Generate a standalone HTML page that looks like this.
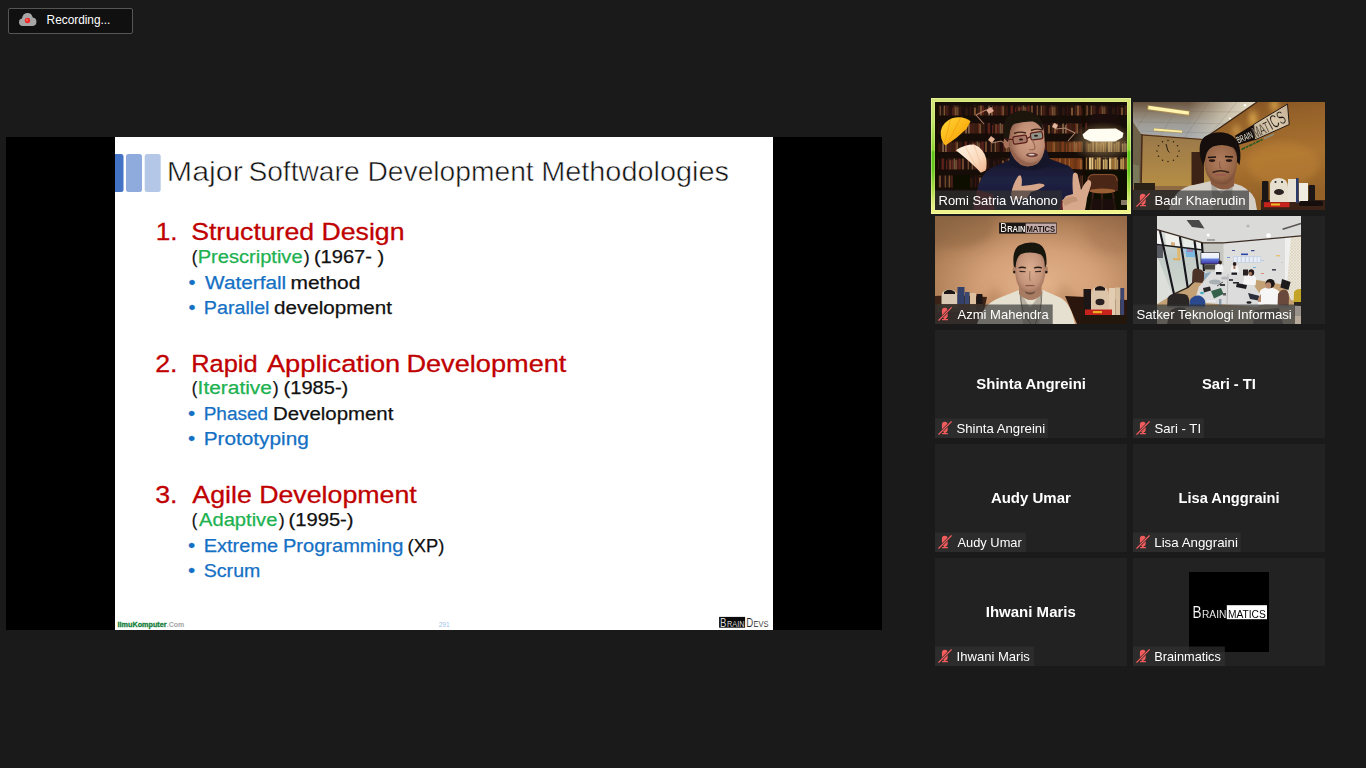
<!DOCTYPE html>
<html>
<head>
<meta charset="utf-8">
<title>Zoom Meeting</title>
<style>
html,body{margin:0;padding:0;width:1366px;height:768px;overflow:hidden;background:#1a1a1a;}
svg{position:absolute;left:0;top:0;display:block;}
text{font-family:"Liberation Sans",sans-serif;}
.lb{font-size:12.7px;fill:#fff;}
.nm{font-size:15px;font-weight:bold;fill:#fff;}
.h{font-size:24.3px;fill:#c00000;stroke:#c00000;stroke-width:.3px;}
.s{font-size:18.8px;fill:#111;stroke:#111;stroke-width:.25px;}
.g{fill:#20b150;stroke:#20b150;}
.b{fill:#1470c4;stroke:#1470c4;}
</style>
</head>
<body>
<svg width="1366" height="768" viewBox="0 0 1366 768">
<defs>
<linearGradient id="spk" x1="0" y1="0" x2="0" y2="1">
<stop offset="0" stop-color="#d6e478"/><stop offset="0.2" stop-color="#c2e468"/><stop offset="0.45" stop-color="#8ed632"/><stop offset="0.465" stop-color="#5cc418"/><stop offset="0.62" stop-color="#68c820"/><stop offset="0.8" stop-color="#b0de4c"/><stop offset="0.92" stop-color="#e2ee80"/><stop offset="1" stop-color="#f2f48a"/>
</linearGradient>

</defs>

<!-- recording badge -->
<rect x="8.5" y="8.5" width="124" height="25" rx="1.5" fill="#101010" stroke="#555" stroke-width="1"/>
<path d="M22.6 26 a3.8 3.8 0 0 1 -0.6 -7.5 a5.6 6.6 0 0 1 10.8 -1 a4.3 4.3 0 0 1 0 8.5 z" fill="#a6a6a6"/>
<circle cx="27.5" cy="20.5" r="2.7" fill="#f02828"/><circle cx="27" cy="20" r="1.1" fill="#ff6a60"/>
<text x="46.6" y="24.4" font-size="12.7" fill="#fff" textLength="63.8" lengthAdjust="spacingAndGlyphs">Recording...</text>

<!-- shared screen -->
<rect x="6" y="137" width="876" height="493" fill="#000"/>
<rect x="115" y="137" width="658" height="493" fill="#fff"/>
<path d="M115 154 h6 a2.5 2.5 0 0 1 2.5 2.5 v33 a2.5 2.5 0 0 1 -2.5 2.5 h-6 z" fill="#4472c4"/>
<rect x="126" y="154" width="16" height="38" rx="2.5" fill="#8faadc"/>
<rect x="144.7" y="154" width="16" height="38" rx="2.5" fill="#b4c7e7"/>
<text x="166.8" y="180.6" font-size="27.2" fill="#111" stroke="#fff" stroke-width="0.5" textLength="76.1" lengthAdjust="spacingAndGlyphs">Major</text>
<text x="248.4" y="180.6" font-size="27.2" fill="#111" stroke="#fff" stroke-width="0.5" textLength="111.2" lengthAdjust="spacingAndGlyphs">Software</text>
<text x="367.5" y="180.6" font-size="27.2" fill="#111" stroke="#fff" stroke-width="0.5" textLength="166.2" lengthAdjust="spacingAndGlyphs">Development</text>
<text x="541.2" y="180.6" font-size="27.2" fill="#111" stroke="#fff" stroke-width="0.5" textLength="187.8" lengthAdjust="spacingAndGlyphs">Methodologies</text>

<!-- block 1 -->
<text class="h" x="155.7" y="239.6" textLength="21.8" lengthAdjust="spacingAndGlyphs">1.</text>
<text class="h" x="191.2" y="239.6" textLength="213.3" lengthAdjust="spacingAndGlyphs">Structured Design</text>
<text class="s" x="191.7" y="263.2" textLength="5.6" lengthAdjust="spacingAndGlyphs">(</text>
<text class="s g" x="197.7" y="263.2" textLength="104.9" lengthAdjust="spacingAndGlyphs">Prescriptive</text>
<text class="s" x="303.7" y="263.2" textLength="5.9" lengthAdjust="spacingAndGlyphs">)</text>
<text class="s" x="313.9" y="263.2" textLength="70.3" lengthAdjust="spacingAndGlyphs">(1967- )</text>
<text class="s b" x="188.4" y="288.6" textLength="7.0" lengthAdjust="spacingAndGlyphs">•</text>
<text class="s b" x="205.1" y="288.6" textLength="81.1" lengthAdjust="spacingAndGlyphs">Waterfall</text>
<text class="s" x="290.5" y="288.6" textLength="69.9" lengthAdjust="spacingAndGlyphs">method</text>
<text class="s b" x="188.4" y="313.7" textLength="7.0" lengthAdjust="spacingAndGlyphs">•</text>
<text class="s b" x="203.8" y="313.7" textLength="65.7" lengthAdjust="spacingAndGlyphs">Parallel</text>
<text class="s" x="274.0" y="313.7" textLength="118.0" lengthAdjust="spacingAndGlyphs">development</text>
<!-- block 2 -->
<text class="h" x="155.2" y="371.9" textLength="22.3" lengthAdjust="spacingAndGlyphs">2.</text>
<text class="h" x="191.2" y="371.9" textLength="66.4" lengthAdjust="spacingAndGlyphs">Rapid</text>
<text class="h" x="266.9" y="371.9" textLength="133.4" lengthAdjust="spacingAndGlyphs">Application</text>
<text class="h" x="406.4" y="371.9" textLength="160.0" lengthAdjust="spacingAndGlyphs">Development</text>
<text class="s" x="191.8" y="393.9" textLength="5.5" lengthAdjust="spacingAndGlyphs">(</text>
<text class="s g" x="197.6" y="393.9" textLength="74.3" lengthAdjust="spacingAndGlyphs">Iterative</text>
<text class="s" x="272.7" y="393.9" textLength="5.9" lengthAdjust="spacingAndGlyphs">)</text>
<text class="s" x="283.6" y="393.9" textLength="64.7" lengthAdjust="spacingAndGlyphs">(1985-)</text>
<text class="s b" x="188.0" y="419.6" textLength="7.2" lengthAdjust="spacingAndGlyphs">•</text>
<text class="s b" x="203.7" y="419.6" textLength="64.5" lengthAdjust="spacingAndGlyphs">Phased</text>
<text class="s" x="273.1" y="419.6" textLength="120.3" lengthAdjust="spacingAndGlyphs">Development</text>
<text class="s b" x="188.0" y="445.0" textLength="7.2" lengthAdjust="spacingAndGlyphs">•</text>
<text class="s b" x="203.7" y="445.0" textLength="105.1" lengthAdjust="spacingAndGlyphs">Prototyping</text>
<!-- block 3 -->
<text class="h" x="155.2" y="503.1" textLength="22.3" lengthAdjust="spacingAndGlyphs">3.</text>
<text class="h" x="192.3" y="503.1" textLength="224.4" lengthAdjust="spacingAndGlyphs">Agile Development</text>
<text class="s" x="191.8" y="526.0" textLength="5.5" lengthAdjust="spacingAndGlyphs">(</text>
<text class="s g" x="199.0" y="526.0" textLength="78.4" lengthAdjust="spacingAndGlyphs">Adaptive</text>
<text class="s" x="278.7" y="526.0" textLength="5.9" lengthAdjust="spacingAndGlyphs">)</text>
<text class="s" x="288.6" y="526.0" textLength="64.9" lengthAdjust="spacingAndGlyphs">(1995-)</text>
<text class="s b" x="188.0" y="551.6" textLength="7.2" lengthAdjust="spacingAndGlyphs">•</text>
<text class="s b" x="203.7" y="551.6" textLength="74.5" lengthAdjust="spacingAndGlyphs">Extreme</text>
<text class="s b" x="282.9" y="551.6" textLength="120.5" lengthAdjust="spacingAndGlyphs">Programming</text>
<text class="s" x="407.6" y="551.6" textLength="36.7" lengthAdjust="spacingAndGlyphs">(XP)</text>
<text class="s b" x="188.0" y="577.0" textLength="7.2" lengthAdjust="spacingAndGlyphs">•</text>
<text class="s b" x="203.8" y="577.0" textLength="56.5" lengthAdjust="spacingAndGlyphs">Scrum</text>

<!-- slide footer -->
<text x="117.6" y="626.7" font-size="8" font-weight="bold" fill="#17803c" stroke="#17803c" stroke-width="0.35" textLength="49" lengthAdjust="spacingAndGlyphs">IlmuKomputer</text>
<text x="166.8" y="626.7" font-size="8" font-weight="bold" fill="#a4a4a4" textLength="17.4" lengthAdjust="spacingAndGlyphs">.Com</text>
<text x="438.7" y="626.8" font-size="7.2" fill="#9cc2ec" textLength="11" lengthAdjust="spacingAndGlyphs">291</text>
<rect x="719.1" y="616.9" width="26" height="10.8" fill="#0a0a0a"/>
<text x="720" y="626.7" font-size="12.6" fill="#d8d8d8" textLength="6.4" lengthAdjust="spacingAndGlyphs">B</text>
<text x="727" y="626.7" font-size="8.4" fill="#d8d8d8" textLength="17.6" lengthAdjust="spacingAndGlyphs">RAIN</text>
<text x="746.2" y="626.7" font-size="12.6" fill="#222" stroke="#fff" stroke-width="0.15" textLength="7" lengthAdjust="spacingAndGlyphs">D</text>
<text x="753.5" y="626.7" font-size="8.4" fill="#222" stroke="#fff" stroke-width="0.1" textLength="15" lengthAdjust="spacingAndGlyphs">EVS</text>

<!-- TILES -->
<g id="tiles">
<!-- speaker border -->
<rect x="931" y="98" width="200" height="116" fill="url(#spk)"/>
<rect x="931.5" y="98.5" width="199" height="115" fill="none" stroke="#ffffc0" stroke-opacity="0.45" stroke-width="1"/>
<rect x="934.5" y="101.5" width="193" height="109" fill="none" stroke="#ffffc0" stroke-opacity="0.25" stroke-width="1"/>
<rect x="935" y="102" width="192" height="108" fill="#1a0f0a"/>
<rect x="1133" y="102" width="192" height="108" fill="#b9853f"/>
<rect x="935" y="216" width="192" height="108" fill="#c79a72"/>
<rect x="1133" y="216" width="192" height="108" fill="#222"/>
<rect x="1157" y="216" width="144" height="108" fill="#d8d8d8"/>
<rect x="935" y="330" width="192" height="108" fill="#222"/>
<rect x="1133" y="330" width="192" height="108" fill="#222"/>
<rect x="935" y="444" width="192" height="108" fill="#222"/>
<rect x="1133" y="444" width="192" height="108" fill="#222"/>
<rect x="935" y="558" width="192" height="108" fill="#222"/>
<rect x="1133" y="558" width="192" height="108" fill="#222"/>
<!--PIC1-->
<svg x="935" y="102" width="192" height="108" viewBox="0 0 192 108" overflow="hidden">
<defs>
<pattern id="bk1" width="97" height="12" patternUnits="userSpaceOnUse"><rect width="97" height="12" fill="#1a0e09"/><rect x="0.0" y="2.0" width="1.2" height="10.0" fill="#24120a"/><rect x="1.6" y="0.0" width="2.6" height="12.0" fill="#24120a"/><rect x="4.6" y="0.0" width="1.5" height="12.0" fill="#7c5032"/><rect x="6.5" y="2.0" width="2.2" height="10.0" fill="#2c140c"/><rect x="8.7" y="0.0" width="1.2" height="12.0" fill="#96683f"/><rect x="10.3" y="0.0" width="2.6" height="12.0" fill="#4a2416"/><rect x="12.9" y="0.0" width="1.5" height="12.0" fill="#3a1a10"/><rect x="14.6" y="1.2" width="1.8" height="10.8" fill="#24120a"/><rect x="16.8" y="2.0" width="1.8" height="10.0" fill="#581e14"/><rect x="18.6" y="0.0" width="1.5" height="12.0" fill="#5e3220"/><rect x="20.1" y="1.2" width="1.5" height="10.8" fill="#96683f"/><rect x="21.8" y="1.2" width="1.8" height="10.8" fill="#7c5032"/><rect x="24.0" y="0.6" width="2.2" height="11.4" fill="#32180f"/><rect x="26.2" y="0.0" width="1.5" height="12.0" fill="#24120a"/><rect x="30.1" y="2.0" width="2.6" height="10.0" fill="#32180f"/><rect x="34.7" y="1.2" width="1.8" height="10.8" fill="#3a1a10"/><rect x="36.5" y="0.0" width="2.2" height="12.0" fill="#24120a"/><rect x="38.9" y="2.0" width="2.2" height="10.0" fill="#8a5a36"/><rect x="42.6" y="0.0" width="2.2" height="12.0" fill="#4a2416"/><rect x="45.0" y="0.0" width="2.2" height="12.0" fill="#8a5a36"/><rect x="47.4" y="0.0" width="1.5" height="12.0" fill="#6a261c"/><rect x="49.3" y="2.0" width="1.8" height="10.0" fill="#40200f"/><rect x="51.1" y="2.0" width="2.2" height="10.0" fill="#3a1a10"/><rect x="53.3" y="0.6" width="1.5" height="11.4" fill="#a8845c"/><rect x="55.0" y="1.2" width="1.0" height="10.8" fill="#3a1a10"/><rect x="56.2" y="2.0" width="1.0" height="10.0" fill="#a8845c"/><rect x="57.2" y="0.6" width="1.0" height="11.4" fill="#96683f"/><rect x="58.4" y="0.6" width="2.2" height="11.4" fill="#581e14"/><rect x="60.6" y="0.0" width="2.2" height="12.0" fill="#4a2416"/><rect x="63.0" y="0.6" width="2.6" height="11.4" fill="#40200f"/><rect x="65.8" y="0.0" width="1.2" height="12.0" fill="#6a261c"/><rect x="67.2" y="0.6" width="2.2" height="11.4" fill="#8a5a36"/><rect x="69.4" y="0.0" width="1.0" height="12.0" fill="#24120a"/><rect x="70.4" y="0.6" width="2.6" height="11.4" fill="#3a1a10"/><rect x="75.6" y="0.0" width="1.5" height="12.0" fill="#6a261c"/><rect x="77.1" y="0.0" width="1.0" height="12.0" fill="#6a261c"/><rect x="80.0" y="2.0" width="1.2" height="10.0" fill="#6a261c"/><rect x="81.4" y="0.0" width="1.5" height="12.0" fill="#3a1a10"/><rect x="83.1" y="1.2" width="2.2" height="10.8" fill="#74402a"/><rect x="85.5" y="1.2" width="1.8" height="10.8" fill="#6a261c"/><rect x="87.7" y="0.0" width="1.0" height="12.0" fill="#a8845c"/><rect x="89.1" y="1.2" width="2.2" height="10.8" fill="#7c5032"/><rect x="91.3" y="1.2" width="1.0" height="10.8" fill="#581e14"/><rect x="92.5" y="0.0" width="2.2" height="12.0" fill="#6a261c"/><rect x="95.9" y="0.0" width="2.6" height="12.0" fill="#7c5032"/></pattern>
<pattern id="bk2" width="83" height="12" patternUnits="userSpaceOnUse"><rect width="83" height="12" fill="#1a0e09"/><rect x="0.0" y="0.6" width="2.2" height="11.4" fill="#7a4a22"/><rect x="2.2" y="0.0" width="1.8" height="12.0" fill="#c8a060"/><rect x="4.0" y="0.0" width="1.5" height="12.0" fill="#5a3018"/><rect x="5.5" y="0.0" width="2.2" height="12.0" fill="#c8a060"/><rect x="8.1" y="1.2" width="1.5" height="10.8" fill="#986a30"/><rect x="9.6" y="2.0" width="1.2" height="10.0" fill="#b8904c"/><rect x="10.8" y="0.0" width="1.0" height="12.0" fill="#b89050"/><rect x="11.8" y="0.6" width="1.2" height="11.4" fill="#7a4a22"/><rect x="13.0" y="1.2" width="1.2" height="10.8" fill="#c8a060"/><rect x="14.4" y="0.0" width="1.8" height="12.0" fill="#986a30"/><rect x="17.9" y="0.0" width="2.6" height="12.0" fill="#e0c080"/><rect x="20.7" y="0.0" width="1.8" height="12.0" fill="#e0c080"/><rect x="22.5" y="0.0" width="1.0" height="12.0" fill="#7a4a22"/><rect x="23.7" y="2.0" width="1.8" height="10.0" fill="#b89050"/><rect x="25.7" y="0.0" width="1.8" height="12.0" fill="#b8904c"/><rect x="27.5" y="0.0" width="2.2" height="12.0" fill="#c8a060"/><rect x="30.1" y="0.6" width="1.5" height="11.4" fill="#3a2010"/><rect x="31.8" y="2.0" width="1.8" height="10.0" fill="#d0b070"/><rect x="33.8" y="1.2" width="1.5" height="10.8" fill="#b89050"/><rect x="35.3" y="2.0" width="1.2" height="10.0" fill="#e0c080"/><rect x="38.0" y="0.6" width="2.6" height="11.4" fill="#e0c080"/><rect x="40.6" y="0.6" width="2.6" height="11.4" fill="#986a30"/><rect x="43.2" y="0.0" width="2.6" height="12.0" fill="#b89050"/><rect x="46.2" y="2.0" width="1.0" height="10.0" fill="#c8a060"/><rect x="49.2" y="1.2" width="2.6" height="10.8" fill="#b89050"/><rect x="51.8" y="0.0" width="1.2" height="12.0" fill="#b8904c"/><rect x="53.4" y="1.2" width="1.0" height="10.8" fill="#986a30"/><rect x="54.4" y="0.0" width="1.8" height="12.0" fill="#7a4a22"/><rect x="56.2" y="1.2" width="2.2" height="10.8" fill="#5a3018"/><rect x="58.6" y="0.6" width="1.8" height="11.4" fill="#7a4a22"/><rect x="60.4" y="2.0" width="1.0" height="10.0" fill="#a87a40"/><rect x="61.8" y="0.0" width="1.5" height="12.0" fill="#986a30"/><rect x="63.5" y="2.0" width="1.0" height="10.0" fill="#e0c080"/><rect x="64.7" y="0.6" width="1.5" height="11.4" fill="#3a2010"/><rect x="66.4" y="0.6" width="2.6" height="11.4" fill="#7a4a22"/><rect x="69.0" y="0.6" width="1.8" height="11.4" fill="#3a2010"/><rect x="71.0" y="2.0" width="1.8" height="10.0" fill="#7a4a22"/><rect x="73.0" y="0.6" width="1.5" height="11.4" fill="#7a4a22"/><rect x="74.9" y="1.2" width="1.5" height="10.8" fill="#986a30"/><rect x="76.6" y="2.0" width="2.2" height="10.0" fill="#986a30"/><rect x="78.8" y="0.6" width="1.5" height="11.4" fill="#5a3018"/><rect x="80.7" y="2.0" width="1.2" height="10.0" fill="#b8904c"/><rect x="82.3" y="2.0" width="1.5" height="10.0" fill="#b8904c"/></pattern>
<filter id="f1" x="-5%" y="-5%" width="110%" height="110%"><feGaussianBlur stdDeviation="0.75"/></filter>
<filter id="f1b" x="-20%" y="-20%" width="140%" height="140%"><feGaussianBlur stdDeviation="1.2"/></filter>
<linearGradient id="lampO" x1="0" y1="0" x2="1" y2="1"><stop offset="0" stop-color="#ffd83a"/><stop offset="0.55" stop-color="#fbb414"/><stop offset="1" stop-color="#e8860c"/></linearGradient>
<linearGradient id="lampW" x1="0" y1="0" x2="1" y2="1"><stop offset="0" stop-color="#fff2e2"/><stop offset="0.6" stop-color="#fbdcc0"/><stop offset="1" stop-color="#eeb088"/></linearGradient>
<radialGradient id="glow1" cx="0.5" cy="0.5" r="0.5"><stop offset="0" stop-color="#ffd890" stop-opacity="0.55"/><stop offset="1" stop-color="#ffd890" stop-opacity="0"/></radialGradient>
</defs>
<rect width="192" height="108" fill="#160c08"/>
<g filter="url(#f1)">
<g transform="translate(0,3.5)"><rect x="3" y="0" width="150" height="10.0" fill="url(#bk1)" opacity="0.85"/></g>
<g transform="translate(-23,21.0)"><rect x="26" y="0" width="150" height="10.5" fill="url(#bk1)" opacity="0.85"/></g>
<g transform="translate(-46,39.5)"><rect x="49" y="0" width="150" height="10.5" fill="url(#bk1)" opacity="0.85"/></g>
<g transform="translate(-69,56.5)"><rect x="72" y="0" width="150" height="11.0" fill="url(#bk1)" opacity="0.85"/></g>
<g transform="translate(-92,73.5)"><rect x="95" y="0" width="150" height="12.0" fill="url(#bk1)" opacity="0.85"/></g>
<g transform="translate(-11,39.5)"><rect x="161.5" y="0" width="42" height="10.5" fill="url(#bk2)" opacity="0.6"/></g>
<g transform="translate(-30,55.5)"><rect x="180.5" y="0" width="42" height="12" fill="url(#bk2)"/></g>
<g transform="translate(-47,3.5)"><rect x="197" y="0" width="42" height="9.5" fill="url(#bk1)" opacity="0.8"/></g>
<rect x="112" y="56" width="35" height="11" fill="#c8641e" opacity="0.45"/>
<rect x="112" y="39.5" width="35" height="10.5" fill="#b86a28" opacity="0.35"/>
<rect x="147.6" y="0" width="2.8" height="108" fill="#120a06"/>
<rect x="0" y="0" width="3" height="108" fill="#120a06"/>
<rect x="18" y="73" width="17" height="14" fill="#0c0806"/>
<rect x="0" y="87" width="60" height="21" fill="#140c08"/>
<polygon points="158,12 181,12 189,29 150,29" fill="#1c100a"/>
<ellipse cx="168" cy="40" rx="34" ry="20" fill="url(#glow1)"/>
<polygon points="147.5,32.5 154,27 181,26.5 188.5,31 187.5,35.5 180,39.5 156,39.5 149,36.5" fill="#fffdf2"/>
<rect x="150.4" y="69" width="42" height="39" fill="#0e0806"/>
<path d="M152 89 v-10 q0 -7.2 7 -7.2 h17 q7 0 7 7.2 v10 z" fill="#4a2616"/>
<path d="M153 79 q0 -6.4 6 -6.4 h17 q6 0 6 6.4" stroke="#8a5232" stroke-width="1" fill="none"/>
<ellipse cx="167.5" cy="89" rx="13" ry="2.4" fill="#9a5e34"/>
<path d="M158 91 L156 108 M178 91 L180 108 M167 92 L167 108" stroke="#3a1e12" stroke-width="2" fill="none"/>
<rect x="156" y="97" width="24" height="11" fill="#1e100a" opacity="0.8"/>
<rect x="186" y="98" width="6" height="5" fill="#b8a890" opacity="0.7"/>

<path d="M41 13 l8 9 M41 13 l10 -5" stroke="#b07a64" stroke-width="1.1" fill="none"/>
<path d="M51 8 l5 -3 l3 4 l-5 3z" fill="#e0a890"/>
<path d="M57 41 l9 -2 l11 7" stroke="#a8806a" stroke-width="1.1" fill="none"/>
<path d="M57 41 l-4 -3 l3 -4 l4 3z" fill="#e0b090"/>
<path d="M121 27 l9 -1 l10 5 l-7 8" stroke="#a8846c" stroke-width="1.1" fill="none"/>
<path d="M121 27 l-4 -2 l2 -4 l4 2z" fill="#e0b8a0"/>
<path d="M5.8 29 Q7.5 20 17 16.2 Q28 13.5 35.6 19.2 L31.6 26.8 Q22 36.5 10.4 43.6 Q5 38 5.8 29 Z" fill="url(#lampO)"/>
<path d="M15.6 17.1 L9.5 41 M26.2 14.9 L13 41" stroke="#f09818" stroke-width="0.7" fill="none"/>
<path d="M20.9 48.3 Q29 42.6 39 42.6 Q48 46 51.2 56.4 Q52 64 50.6 68.6 L45.8 70.8 Q37 61 20.9 48.3 Z" fill="url(#lampW)"/>
<path d="M39 42.8 L48 69 M30 44 L42 66" stroke="#f0c0a0" stroke-width="0.7" fill="none"/>
</g>
<defs><radialGradient id="face1" cx="0.6" cy="0.45" r="0.6"><stop offset="0" stop-color="#d0a086"/><stop offset="0.6" stop-color="#c08e74"/><stop offset="1" stop-color="#8e5e4a"/></radialGradient>
<linearGradient id="swt" x1="0" y1="0" x2="0" y2="1"><stop offset="0" stop-color="#141428"/><stop offset="0.4" stop-color="#1f2142"/><stop offset="1" stop-color="#191a36"/></linearGradient>
<filter id="f1p" x="-5%" y="-5%" width="110%" height="110%"><feGaussianBlur stdDeviation="0.7"/></filter></defs>
<g filter="url(#f1p)">
<path d="M40 108 L42.8 86 Q46 72 56 66 L76 57.5 L114 56.5 L134 64 Q142 70 143 86 L146 108 Z" fill="url(#swt)"/>
<path d="M38 108 L42 88 L58 92 L60 108 Z" fill="#5e1c26"/>
<path d="M124 108 L126 98 L140 100 L142 108 Z" fill="#6a1c26"/>
<path d="M75 50 L112 48 L116 62 Q96 74 74 62 Z" fill="#13142a"/>
<ellipse cx="71.5" cy="40.5" rx="3" ry="6" fill="#a87058"/>
<path d="M73 30 Q74 20 84 18 L102 16 Q108 20 109 30 L110 44 Q109 56 102 62 Q94 66 86 63 Q78 58 75 48 Z" fill="url(#face1)"/>
<path d="M68.8 36 Q67 22 72 15 Q78 9 88 8.5 Q99 9 105 16 Q108.5 22 108 29 Q104 21 98 19.5 Q88 19 79 22 Q75 25 74.5 33 L73 40 Z" fill="#1c1411"/>
<path d="M79 31.5 Q85 29 91 31" stroke="#3a2218" stroke-width="1.4" fill="none"/>
<path d="M96 28.5 Q102 26 107 28" stroke="#3a2218" stroke-width="1.4" fill="none"/>
<path d="M70 37 L78 37.5 M92 36.5 L95.6 34.5" stroke="#4a1a16" stroke-width="1.2" fill="none"/>
<rect x="78" y="33.8" width="14" height="7.6" rx="2" fill="#a87866" stroke="#5a1e1a" stroke-width="1.2" transform="rotate(-8 85 37.6)"/>
<rect x="95.6" y="30.2" width="12" height="7.2" rx="2" fill="#8e9488" stroke="#5a1e1a" stroke-width="1.2" transform="rotate(-8 101.6 33.8)"/>
<ellipse cx="86" cy="37.5" rx="2" ry="1" fill="#2a1612"/><ellipse cx="101" cy="33.8" rx="2" ry="1" fill="#2a1612"/>
<path d="M97 38 Q101 44 99.5 47 Q97 48.5 94 47.5" stroke="#9a6a54" stroke-width="1.3" fill="none"/>
<ellipse cx="97" cy="53" rx="6" ry="2.2" fill="#6e3c38"/>
<ellipse cx="96.5" cy="52.6" rx="3.2" ry="0.9" fill="#e0d0c8"/>
<path d="M75 46 Q80 62 92 64.5 Q102 64 108 54 Q104 60 96 61 Q84 60 78 48 Z" fill="#94644e"/>
<path d="M76 92 Q78 82 82 76 Q84 72 86 74 Q87.5 78 86.5 84 Q96 83 104 81.5 Q110 81.5 109.5 84 Q104 88 96 90 L92 96 L78 98 Z" fill="#d6a68a"/>
<path d="M128 108 Q126 98 131 94 L138 92 Q137 80 138 72 Q140 69 142.5 72 L146 88 Q150 80 153 78 Q157 78 156 83 L152 96 Q151 104 150 108 Z" fill="#d8a88c"/>
<path d="M127 98 Q134 93 141 95 L143 99 Q136 100 130 104 Z" fill="#c49476"/>
</g>
</svg>
<!--/PIC1-->
<!--PIC2-->
<svg x="1133" y="102" width="192" height="108" viewBox="0 0 192 108" overflow="hidden">
<defs>
<filter id="f2" x="-5%" y="-5%" width="110%" height="110%"><feGaussianBlur stdDeviation="0.6"/></filter>
<filter id="f2b" x="-30%" y="-30%" width="160%" height="160%"><feGaussianBlur stdDeviation="3"/></filter>
<linearGradient id="wallR" x1="0" y1="0" x2="0.25" y2="1"><stop offset="0" stop-color="#7a4a20"/><stop offset="0.3" stop-color="#96622a"/><stop offset="0.65" stop-color="#aa7230"/><stop offset="1" stop-color="#946228"/></linearGradient>
<linearGradient id="wallL" x1="0" y1="0" x2="0" y2="1"><stop offset="0" stop-color="#8c7048"/><stop offset="0.4" stop-color="#a27e48"/><stop offset="1" stop-color="#b68e44"/></linearGradient>
<linearGradient id="ceil" x1="0" y1="0" x2="0" y2="1"><stop offset="0" stop-color="#6a5440"/><stop offset="0.3" stop-color="#8c7e6c"/><stop offset="0.6" stop-color="#9e9c96"/><stop offset="1" stop-color="#a8acb0"/></linearGradient><linearGradient id="ceil2" x1="0" y1="0" x2="1" y2="0"><stop offset="0.45" stop-color="#e8dfc8" stop-opacity="0"/><stop offset="0.8" stop-color="#e8dfc8" stop-opacity="0.75"/><stop offset="1" stop-color="#efe6d0" stop-opacity="0.95"/></linearGradient>
<radialGradient id="face2" cx="0.5" cy="0.45" r="0.6"><stop offset="0" stop-color="#b07e5e"/><stop offset="0.7" stop-color="#986648"/><stop offset="1" stop-color="#6e4430"/></radialGradient>
</defs>
<g filter="url(#f2)">
<rect width="192" height="108" fill="url(#wallR)"/>
<g filter="url(#f2b)"><ellipse cx="103.5" cy="29" rx="2" ry="6" fill="#f8c460" opacity="0.95"/><ellipse cx="120" cy="17" rx="2.4" ry="8" fill="#ffcc60"/><ellipse cx="141.5" cy="3" rx="3" ry="7" fill="#f4bc54" opacity="0.9"/><ellipse cx="150" cy="62" rx="36" ry="22" fill="#c08438" opacity="0.45"/></g>
<polygon points="0,20 8,32 68,37 92,36 92,86 0,86" fill="url(#wallL)"/>
<polygon points="0,20 8,32 8,80 0,84" fill="#6e6248"/><path d="M0 13 L9 33 L8 86" stroke="#4a2a1a" stroke-width="1.6" fill="none"/>
<polygon points="0,62 6,64 6,84 0,86" fill="#7a7a5a"/>
<polygon points="0,0 124,0 92,22 70,37 8,32 0,20" fill="url(#ceil)"/><polygon points="0,0 124,0 92,22 70,37 8,32 0,20" fill="url(#ceil2)"/>
<path d="M20 0 L4 26 M48 0 L28 33 M76 0 L52 35 M104 0 L74 36 M0 9 L110 10 M4 20 L96 22 M8 29 L80 31" stroke="#6e6456" stroke-width="0.4" fill="none" opacity="0.55"/>
<polygon points="14.5,3 57,9 56.5,14 14,8" fill="#c8a040" opacity="0.55"/><polygon points="15.5,3.8 56,9.6 55.6,12.8 15.2,7.2" fill="#fff4b0"/>
<polygon points="20.5,26 49.5,28.2 49.5,31.2 20.5,29.2" fill="#c8a040" opacity="0.5"/><polygon points="21,26.6 49,28.7 49,30.5 21,28.6" fill="#fff0a0"/>
<circle cx="112" cy="3.3" r="1.2" fill="#fff"/><circle cx="97" cy="16.5" r="1" fill="#fff"/>
<path d="M9 33 L70 37.5" stroke="#4a2c1a" stroke-width="1.1" fill="none"/>
<path d="M124 0 L70 37.5" stroke="#3a2414" stroke-width="1.3" fill="none"/>
<circle cx="35.0" cy="38.4" r="0.75" fill="#2a1c10"/>
<circle cx="40.5" cy="39.8" r="0.75" fill="#2a1c10"/>
<circle cx="44.5" cy="43.7" r="0.75" fill="#2a1c10"/>
<circle cx="46.0" cy="49.0" r="0.75" fill="#2a1c10"/>
<circle cx="44.5" cy="54.3" r="0.75" fill="#2a1c10"/>
<circle cx="40.5" cy="58.2" r="0.75" fill="#2a1c10"/>
<circle cx="35.0" cy="59.6" r="0.75" fill="#2a1c10"/>
<circle cx="29.5" cy="58.2" r="0.75" fill="#2a1c10"/>
<circle cx="25.5" cy="54.3" r="0.75" fill="#2a1c10"/>
<circle cx="24.0" cy="49.0" r="0.75" fill="#2a1c10"/>
<circle cx="25.5" cy="43.7" r="0.75" fill="#2a1c10"/>
<circle cx="29.5" cy="39.8" r="0.75" fill="#2a1c10"/>
<path d="M35 49 L33 42 M35 49 L36.4 50.5" stroke="#1c120a" stroke-width="0.9" fill="none"/>
<rect x="58.5" y="50" width="12.5" height="33" fill="#3e2412"/>
<rect x="0" y="84" width="92" height="24" fill="#8e6a42"/>
<rect x="1" y="81" width="21" height="9" fill="#2a2018"/>
<rect x="0" y="88" width="60" height="20" fill="#3c2c20"/>
<polygon points="102,33.8 120.6,22.5 121.7,38 105.2,43" fill="#14100c"/>
<defs><linearGradient id="sgn" x1="0" y1="1" x2="1" y2="0"><stop offset="0" stop-color="#b8a890"/><stop offset="0.5" stop-color="#dccbb0"/><stop offset="1" stop-color="#c4b094"/></linearGradient></defs>
<polygon points="120.6,22.5 154.5,2.1 156.2,22.5 121.7,38" fill="url(#sgn)" stroke="#14100c" stroke-width="0.9"/>
<g transform="translate(105.3,41.6) rotate(-23)"><text x="0" y="0" font-size="9.5" fill="#f4efe0" textLength="16.5" lengthAdjust="spacingAndGlyphs">BRAIN</text></g>
<g transform="translate(122.4,36.4) rotate(-25.5)" fill="#15110d" stroke="#d8c8ac" stroke-width="0.3"><text x="0" y="0" font-size="15.5" textLength="17.5" lengthAdjust="spacingAndGlyphs">MAT</text><text x="18" y="-0.4" font-size="18.5" transform="rotate(-3.5 18 0)" textLength="18" lengthAdjust="spacingAndGlyphs">ICS</text></g>
<path d="M108.5 47.5 L130 37.2" stroke="#2a5a26" stroke-width="1.6" fill="none" stroke-dasharray="4 0.8 2.5 0.8"/>
<path d="M131 36.8 L141 32" stroke="#8a8a7a" stroke-width="1.5" fill="none"/>
<rect x="128" y="98" width="64" height="10" fill="#3a2416"/>
<rect x="129" y="79" width="6.5" height="21" rx="1" fill="#1c1814"/>
<path d="M137 100 L137 84 Q137 76 146 76 Q155 76 155 86 L155 100 Z" fill="#e6dfd0"/>
<ellipse cx="146" cy="90" rx="5" ry="3" fill="#2a2420"/>
<circle cx="142.5" cy="80" r="1" fill="#222"/><circle cx="149" cy="80" r="1" fill="#222"/>
<rect x="155" y="77" width="8" height="23" fill="#e8e2d6"/>
<rect x="163" y="76" width="2.6" height="25" fill="#2a3a6a"/>
<rect x="166" y="81" width="9" height="20" fill="#f0ece2"/>
<rect x="175.5" y="83" width="6.5" height="17" rx="1" fill="#1a1612"/>
<rect x="131" y="100.2" width="25.5" height="5" fill="#c8201c"/>
<rect x="138" y="101.5" width="9" height="2" fill="#e8c020"/>
<rect x="166" y="99" width="24" height="5" rx="1.5" fill="#14110e"/>
<path d="M36 108 Q40 89 56 84 L78 79 L100 81 Q116 85 122 97 L124 108 Z" fill="#d4d0c8"/>
<path d="M78 79 L88 92 L100 81 L98 108 L80 108 Z" fill="#a8a49c"/>
<path d="M76 70 L102 70 L101 84 Q90 92 78 82 Z" fill="#8a5a40"/>
<path d="M71 52 Q70 42 78 40 L100 40 Q105 44 104.5 54 L103.5 66 Q102 77 94 81.5 Q87 84 80 80 Q72.5 74 71.5 63 Z" fill="url(#face2)"/>
<path d="M67.5 56 Q64.5 40 72 34.5 Q81 29.5 90 30.5 Q100 31.5 105 40 Q109 50 106.5 63 L104 60 Q105 50 100 45.5 Q90 41 80 44.5 Q73 48 72 58 L70 64 Z" fill="#15110f"/>
<path d="M75 55.5 L83 55 M92 54.5 L100 55" stroke="#1c120e" stroke-width="1.6" fill="none"/>
<ellipse cx="79" cy="58.6" rx="3.2" ry="1.3" fill="#2a1812"/><ellipse cx="96" cy="58.6" rx="3.2" ry="1.3" fill="#2a1812"/>
<path d="M87 59 Q86 65 88 66.5" stroke="#8a5a40" stroke-width="1.1" fill="none"/>
<path d="M79.5 70.5 Q87.5 67 96 70.5" stroke="#3a241a" stroke-width="1.7" fill="none"/>
<path d="M82.5 72.8 L93 72.8" stroke="#9a5a50" stroke-width="1.5" fill="none"/>
</g>
</svg>
<!--/PIC2-->
<!--PIC3-->
<svg x="935" y="216" width="192" height="108" viewBox="0 0 192 108" overflow="hidden">
<defs>
<filter id="f3" x="-5%" y="-5%" width="110%" height="110%"><feGaussianBlur stdDeviation="0.6"/></filter>
<filter id="f3b" x="-30%" y="-30%" width="160%" height="160%"><feGaussianBlur stdDeviation="5"/></filter>
<radialGradient id="bg3" cx="0.55" cy="0.62" r="0.75"><stop offset="0" stop-color="#e2b28a"/><stop offset="0.4" stop-color="#d4a078"/><stop offset="0.75" stop-color="#b08058"/><stop offset="1" stop-color="#8a6242"/></radialGradient>
<radialGradient id="face3" cx="0.5" cy="0.45" r="0.6"><stop offset="0" stop-color="#dcae90"/><stop offset="0.65" stop-color="#c4947a"/><stop offset="1" stop-color="#966a52"/></radialGradient>
</defs>
<g filter="url(#f3)">
<rect width="192" height="108" fill="url(#bg3)"/>
<g filter="url(#f3b)"><polygon points="60,70 84,108 30,108" fill="#a87850" opacity="0.45"/><polygon points="128,66 160,100 110,108" fill="#a87850" opacity="0.4"/><ellipse cx="20" cy="10" rx="40" ry="22" fill="#8e6646" opacity="0.55"/><ellipse cx="180" cy="14" rx="30" ry="24" fill="#a07450" opacity="0.4"/></g>
<rect x="64.1" y="6.6" width="57.5" height="11" fill="#1c1614"/>
<rect x="90.7" y="7.5" width="30.4" height="9.4" fill="#c2aaa8"/>
<text x="65.2" y="16.2" font-size="12.4" fill="#f4f0ec" textLength="6.6" lengthAdjust="spacingAndGlyphs">B</text>
<text x="72.2" y="16.2" font-size="9" fill="#f4f0ec" font-weight="bold" textLength="18.2" lengthAdjust="spacingAndGlyphs">RAIN</text>
<text x="91.4" y="16.2" font-size="9.4" fill="#1c1412" font-weight="bold" textLength="28.8" lengthAdjust="spacingAndGlyphs">MATICS</text>
<polygon points="0,80 20,79 52,81 46,108 0,108" fill="#3a2014"/>
<polygon points="192,84 150,81 130,80 142,108 192,108" fill="#2a160c"/>
<path d="M6.5 92 L6.5 80 Q7 73.5 14 73.5 Q22 73.5 22.5 80 L22.5 92 Z" fill="#d8c8b4"/>
<path d="M9 76 Q14 71.5 20 76 L20 78 L9 78 Z" fill="#1c1614"/>
<rect x="22.5" y="71" width="7" height="24" fill="#30406a"/>
<rect x="30" y="76" width="4.5" height="19" fill="#3a4a72"/>
<rect x="35" y="77" width="6" height="18" fill="#dcc0a0"/>
<rect x="41.5" y="78" width="6" height="17" rx="0.8" fill="#1c1614"/>
<rect x="2" y="88" width="46" height="8" fill="#4a3224" opacity="0.9"/>
<rect x="148.5" y="73" width="7.5" height="21" fill="#1e1816"/>
<path d="M156 94 L156 80 Q156 70 165 70 Q174 70 174 80 L174 94 Z" fill="#dcc4a8"/>
<path d="M160 72 Q165 68 170 72 L170 74.5 L160 74.5 Z" fill="#1c1614"/>
<ellipse cx="165" cy="86" rx="4.5" ry="3.2" fill="#2a2220"/>
<rect x="174" y="72" width="6" height="28" fill="#e2cdb2"/>
<rect x="180.2" y="71.5" width="5" height="29" fill="#d8c0a2"/>
<rect x="185.4" y="72" width="3.8" height="28" fill="#3a4470"/>
<rect x="150" y="93.5" width="27" height="5.6" fill="#c8241e"/>
<rect x="158" y="95" width="9" height="2.2" fill="#e8b020"/>
<rect x="146" y="99" width="46" height="9" fill="#24140e"/>
<path d="M42 108 Q48 88 64 82 L84 74 L108 74 L126 82 Q136 88 140 108 Z" fill="#e6e0d0"/>
<path d="M84 74 L95 92 L108 74 L104 108 L88 108 Z" fill="#b8b0a0"/>
<path d="M86 74 Q84 96 96 108 M106 78 Q108 92 100 108" stroke="#4a4440" stroke-width="0.7" fill="none"/>
<path d="M84 64 L106 64 L107 78 Q96 90 84 78 Z" fill="#a87c62"/>
<ellipse cx="79.6" cy="54" rx="2" ry="4" fill="#b08468"/><ellipse cx="111" cy="54" rx="2" ry="4" fill="#b08468"/>
<circle cx="79.4" cy="56" r="1.3" fill="#1a1614"/><circle cx="111.2" cy="56" r="1.3" fill="#1a1614"/>
<path d="M80 44 Q80 34 90 33 L102 33 Q110.5 35 110.5 46 L110 60 Q108 72 100 76.5 Q95 78.5 90 76.5 Q82 72 80.5 60 Z" fill="url(#face3)"/>
<path d="M78.7 50 Q77 34 84 29.5 Q94 24.5 104 28 Q112 32 111.5 48 L110 52 Q110 42 106 38.5 Q96 35 86 38 Q81 41 80.5 52 Z" fill="#161210"/>
<path d="M83.5 52 Q87 50.5 91 52 M99 52 Q103 50.5 107 52" stroke="#2a1c16" stroke-width="1.3" fill="none"/>
<path d="M84.5 55.4 L90.5 55.8 M100 55.8 L106 55.4" stroke="#3a2820" stroke-width="1.1" fill="none"/>
<path d="M95 55 Q94 63 95.5 65" stroke="#a07860" stroke-width="1.1" fill="none"/>
<path d="M90.5 69.6 L99.5 69.6" stroke="#8a5648" stroke-width="1.3" fill="none"/>
<path d="M90 75 Q95 78 100 75 L99 77.5 Q95 79.5 91 77.5 Z" fill="#5a4034" opacity="0.7"/>
</g>
</svg>
<!--/PIC3-->
<!--PIC4-->
<svg x="1157" y="216" width="144" height="108" viewBox="0 0 144 108" overflow="hidden">
<defs>
<filter id="f4" x="-5%" y="-5%" width="110%" height="110%"><feGaussianBlur stdDeviation="0.55"/></filter>
<linearGradient id="tv4" x1="0" y1="0" x2="0" y2="1"><stop offset="0" stop-color="#f4f6fa"/><stop offset="0.45" stop-color="#e8eefa"/><stop offset="0.6" stop-color="#5a78d8"/><stop offset="1" stop-color="#4a3aa8"/></linearGradient>
<linearGradient id="gl4" x1="0" y1="0" x2="0" y2="1"><stop offset="0" stop-color="#d8dcd8"/><stop offset="0.35" stop-color="#c2ccc6"/><stop offset="1" stop-color="#d4d8d2"/></linearGradient>
<pattern id="pw4" width="3" height="3" patternUnits="userSpaceOnUse"><rect width="3" height="3" fill="#ece6d8"/><path d="M0 0 L3 3 M3 0 L0 3" stroke="#d4ccb8" stroke-width="0.5"/></pattern>
</defs>
<g filter="url(#f4)">
<rect width="144" height="108" fill="#dcdcda"/>
<polygon points="0,74 50,58 128,66 144,80 144,108 0,108" fill="#c4a074"/>
<polygon points="46,26 66.5,26.4 128,21 128,69 100,64 66.5,56 46,56" fill="#dededc"/>
<polygon points="46,26 66.5,26.4 66.5,56 46,56" fill="#c6c6c0"/>
<polygon points="128,21 144,19 144,86 134,84 128,69" fill="url(#pw4)"/>
<polygon points="128,21 134,20.5 130,69 128,69" fill="#f0f0ee"/>
<rect x="75" y="34" width="3" height="1" fill="#4a5a9a"/>
<rect x="94" y="34" width="3.5" height="1.2" fill="#3a4a8a"/>
<rect x="84" y="37.5" width="7" height="1.6" fill="#2a4aa8"/>
<rect x="70" y="41" width="3" height="1" fill="#6a9ad8"/>
<rect x="119" y="39" width="4" height="1.4" fill="#e8c070"/>
<rect x="104" y="44" width="3" height="1" fill="#b8c8e0"/>
<rect x="96" y="51" width="3" height="1" fill="#6ab0d8"/>
<rect x="115" y="53" width="4" height="1.6" fill="#4a4a5a"/>
<rect x="104" y="57" width="3" height="1" fill="#e08a7a"/>
<rect x="124" y="46" width="2" height="1" fill="#c8c8d8"/>
<rect x="76" y="40" width="28" height="7" fill="#c4d0e4" opacity="0.8"/>
<rect x="77" y="41" width="2.6" height="5" fill="#e8eef8"/>
<rect x="81" y="41" width="2.6" height="5" fill="#e8eef8"/>
<rect x="85" y="41" width="2.6" height="5" fill="#e8eef8"/>
<rect x="89" y="41" width="2.6" height="5" fill="#e8eef8"/>
<rect x="93" y="41" width="2.6" height="5" fill="#e8eef8"/>
<rect x="97" y="41" width="2.6" height="5" fill="#e8eef8"/>
<rect x="100.5" y="41" width="2.6" height="5" fill="#e8eef8"/>
<polygon points="0,14 46,27 47,56 30,71 17,77 0,88" fill="url(#gl4)"/>
<polygon points="0,40 14,75 17,78 0,88" fill="#dcdfda"/>
<polygon points="10,17 22,20 22,28 10,26" fill="#e8e6e0"/>
<polygon points="16,26 22,27 22,30 16,29.5" fill="#d8b888"/>
<polygon points="25,31 36,32 36,38 25,38" fill="#a8c8e0"/>
<polygon points="0,29 6,30 6,42 0,42" fill="#5a5a62"/>
<polygon points="0,15 5,16.5 6,29 0,28.5" fill="#f4f4f2"/><polygon points="8,17 22,21 23,31 9,29.5" fill="#f0f0ec"/><polygon points="26,22.5 37,25.5 37.5,32 26.5,31" fill="#e6ece8"/><polygon points="39.5,26 44,27 44.5,33 40,32.5" fill="#eef0ec"/><polygon points="14,26 18,26.5 18,30 14,29.5" fill="#d8b080"/><polygon points="20,31 23,31.5 23.5,44 20.5,44" fill="#e0b870"/><polygon points="16,42 23,42.5 23,44.5 16,44" fill="#e0b060"/><polygon points="29,33 38,33.5 38,41 29,41" fill="#7ab8e0"/><polygon points="30,33 36,33.5 36,36 30,36" fill="#c05a8a" opacity="0.6"/><path d="M3 15 L17 78 M22.8 20.5 L30.8 72 M37.5 25 L41.7 58 M44.9 26.6 L47 55" stroke="#16161a" stroke-width="2.1" fill="none"/>
<path d="M0 28.5 L46 34 M17 78 L31 71.5 L47 56" stroke="#1c1c1e" stroke-width="1.3" fill="none"/>
<polygon points="0,0 144,0 144,19.5 128,21 66.5,26.4 46,26.4 0,13.3" fill="#dadad8"/>
<path d="M0 13.6 L46 26.8 L66.5 26.8 L128 21.4 L144 19.9" stroke="#3a2c22" stroke-width="1.15" fill="none"/>
<polygon points="29.5,4 42,4 47.5,12.5 35,11" fill="#4a4a48"/>
<path d="M125.6 13.3 L144 7.5" stroke="#5a5652" stroke-width="1.6" fill="none"/>
<circle cx="51.2" cy="19.1" r="1.6" fill="#fff"/><circle cx="111.4" cy="19.6" r="2.4" fill="#fff"/>
<circle cx="91" cy="10" r="1.6" fill="#b8b8b4"/>
<path d="M50 24 L58 24" stroke="#6a6a66" stroke-width="1" fill="none"/>
<rect x="43.6" y="36.4" width="19" height="12" fill="#1c2030"/>
<rect x="44.2" y="37" width="17.8" height="10.6" fill="url(#tv4)"/>
<rect x="48" y="48.5" width="10" height="5" fill="#4a4440"/>
<path d="M35 66 L35.5 56 Q36 52 40 52.5 L45 54 Q47.5 56 47.5 60 L46 67 Z" fill="#4c3028"/>
<path d="M47 58 Q50 55.5 55.5 56.5 L57 67 Q52 70 47 68 Z" fill="#8eaaba"/>
<polygon points="54.9,55.6 88.4,56.3 100,73.8 108.8,85.5 100,91.3 37.4,86 41.7,70.9" fill="#dcdcdc"/>
<path d="M71 58 L70 88" stroke="#b0b0b0" stroke-width="0.8" fill="none"/>
<polygon points="54,75 64,72 66.5,78 57,82.6" fill="#34604a"/>
<polygon points="46,72 53,70.5 54,74.5 47,76.5" fill="#2a2a2c"/>
<polygon points="80,67 90,69 89,73 79,71" fill="#1e1e22"/>
<polygon points="91,77 103,80 101.5,84.5 93,83" fill="#2a2e3a"/>
<rect x="59" y="55.5" width="5.5" height="3" fill="#1c1c20"/><rect x="74.5" y="55.8" width="5.5" height="3" fill="#1c1c20"/>
<ellipse cx="58" cy="66" rx="6" ry="2.5" fill="#a8b0b4"/><ellipse cx="68" cy="62" rx="4" ry="1.6" fill="#b8b8bc"/>
<ellipse cx="92" cy="86.5" rx="2.6" ry="1.3" fill="#1c1c1c"/>
<rect x="62" y="83" width="2.4" height="7" fill="#8a9aa8"/>
<rect x="63" y="68" width="5" height="2" fill="#3a3a3e"/><rect x="72" y="63" width="4" height="2" fill="#4a4a50"/><rect x="66" y="77" width="3" height="2.5" fill="#5a5a60"/><ellipse cx="45" cy="77" rx="2" ry="1.2" fill="#4ab0c0"/><rect x="76" y="66" width="6" height="1.6" fill="#2a2a2e"/><rect x="50" y="84" width="9" height="2" fill="#e8e8ea"/><path d="M60 70 L66 66" stroke="#2a2a2e" stroke-width="0.8"/>
<path d="M58 56 L58.5 50 Q60 47.5 62.5 47.5 Q66 48 66.5 51 L66.5 56 Z" fill="#f2f2f2"/><ellipse cx="63.2" cy="46.6" rx="1.7" ry="2" fill="#2a1e1a"/>
<path d="M73.8 56.5 L74 51 Q75 49 78 49 Q81 49.4 81.6 52 L81.8 56.5 Z" fill="#f2f2f2"/><ellipse cx="77.6" cy="48" rx="1.8" ry="2.1" fill="#2a1e1a"/><rect x="76.4" y="50" width="2" height="3" fill="#a87a62"/>
<path d="M86 68 L87.5 60 Q90 57.5 94 58 Q99 59.5 99.3 63 L98.5 69.5 Z" fill="#f4f4f4"/><ellipse cx="94.3" cy="56.6" rx="2.9" ry="3.3" fill="#2a1e1a"/><ellipse cx="93.4" cy="57.8" rx="1.6" ry="2" fill="#a87a62"/>
<path d="M101 89 L103 75 Q107 70.5 114 71.5 Q122 73 123.6 78 L124.6 89 Z" fill="#f6f6f6"/>
<ellipse cx="113.2" cy="67.6" rx="4.6" ry="4.6" fill="#1e1614"/><ellipse cx="111.4" cy="69.4" rx="2.8" ry="3.2" fill="#b88a70"/>
<path d="M104 78 Q100 82 101 86 L104 86 Z" fill="#b88a70"/>
<path d="M10 92 L10.6 82 Q13 77.3 20 77.3 L28 78.3 Q32.3 80 32.3 86 L32 92 Z" fill="#2c2626"/>
<path d="M31.5 92.8 L33 84 Q36 79 42 79.5 Q47.5 81 48.3 86 L48 92.8 Z" fill="#2a4a8e"/>
<rect x="86" y="53.5" width="5" height="6" fill="#2a2422"/>
<polygon points="125,63 133.6,66 131.5,74 123.4,71.5" fill="#1c1a1a"/>
<path d="M120.5 91.3 L121 78 Q124 72.5 129 74 Q132 76 132 82 L131.5 91.3 Z" fill="#6a4a3c"/>
<path d="M136.5 87 L137 76 Q139 72.5 144 73 L144 87 Z" fill="#c4a428"/>
<rect x="137" y="86" width="7" height="14" fill="#2a2624"/>
<polygon points="0,90 100,91 108,88 144,90 144,108 0,108" fill="#b4aca4" opacity="0.8"/>
<path d="M10 108 L14 94 Q20 90 28 92 L34 108 Z" fill="#4a3c36"/>
<path d="M96 108 L98 94 L122 92 L126 108 Z" fill="#6a6660"/>
</g>
</svg>
<!--/PIC4-->
<!--PIC10-->
<rect x="1189" y="572" width="80" height="80" fill="#000"/>
<rect x="1226.8" y="605.2" width="40.2" height="14" fill="#fff"/>
<text x="1192.4" y="618.3" font-size="16.6" fill="#fff" stroke="#000" stroke-width="0.15" textLength="9" lengthAdjust="spacingAndGlyphs">B</text>
<text x="1202" y="618.3" font-size="11.6" fill="#fff" stroke="#000" stroke-width="0.1" textLength="24.4" lengthAdjust="spacingAndGlyphs">RAIN</text>
<text x="1228" y="618" font-size="10" fill="#000" textLength="37.8" lengthAdjust="spacingAndGlyphs">MATICS</text>
<!--/PIC10-->
</g>

<!-- center names -->
<text id="c0" class="nm" x="976.37" y="389.0" textLength="109.62" lengthAdjust="spacingAndGlyphs">Shinta Angreini</text>
<text id="c1" class="nm" x="1201.91" y="389.0" textLength="54.05" lengthAdjust="spacingAndGlyphs">Sari - TI</text>
<text id="c2" class="nm" x="990.90" y="503.0" textLength="79.93" lengthAdjust="spacingAndGlyphs">Audy Umar</text>
<text id="c3" class="nm" x="1178.58" y="503.0" textLength="101.02" lengthAdjust="spacingAndGlyphs">Lisa Anggraini</text>
<text id="c4" class="nm" x="985.77" y="617.0" textLength="90.07" lengthAdjust="spacingAndGlyphs">Ihwani Maris</text>

<!-- labels -->
<g id="labels">
<rect x="935.0" y="190.5" width="126.7" height="19.5" fill="#323232" fill-opacity="0.665"/>
<text id="l0" class="lb" x="938.50" y="204.8" textLength="119.32" lengthAdjust="spacingAndGlyphs">Romi Satria Wahono</text>
<rect x="1133.0" y="190.5" width="116.0" height="19.5" fill="#323232" fill-opacity="0.665"/>
<g transform="translate(1133,191)"><path d="M6.9 5.6 a2.9 2.9 0 0 1 5.8 0 v4.6 a2.9 3.2 0 0 1 -5.8 0 z" fill="#f25c5c"/><rect x="9.1" y="12.6" width="1.6" height="1.8" fill="#f25c5c"/><rect x="6.9" y="14" width="6.2" height="1.15" rx="0.4" fill="#f25c5c"/><path d="M3.9 15.1 L16.2 2.9" stroke="#2b2b2b" stroke-width="2.7" fill="none"/><path d="M3.8 15.2 L16.3 2.8" stroke="#f25c5c" stroke-width="1.25" stroke-linecap="round" fill="none"/></g>
<text id="l1" class="lb" x="1154.48" y="204.8" textLength="91.11" lengthAdjust="spacingAndGlyphs">Badr Khaerudin</text>
<rect x="935.0" y="304.5" width="117.7" height="19.5" fill="#323232" fill-opacity="0.665"/>
<g transform="translate(935,305)"><path d="M6.9 5.6 a2.9 2.9 0 0 1 5.8 0 v4.6 a2.9 3.2 0 0 1 -5.8 0 z" fill="#f25c5c"/><rect x="9.1" y="12.6" width="1.6" height="1.8" fill="#f25c5c"/><rect x="6.9" y="14" width="6.2" height="1.15" rx="0.4" fill="#f25c5c"/><path d="M3.9 15.1 L16.2 2.9" stroke="#2b2b2b" stroke-width="2.7" fill="none"/><path d="M3.8 15.2 L16.3 2.8" stroke="#f25c5c" stroke-width="1.25" stroke-linecap="round" fill="none"/></g>
<text id="l2" class="lb" x="957.57" y="318.8" textLength="91.10" lengthAdjust="spacingAndGlyphs">Azmi Mahendra</text>
<rect x="1133.0" y="304.5" width="162.0" height="19.5" fill="#323232" fill-opacity="0.665"/>
<text id="l3" class="lb" x="1136.40" y="318.8" textLength="155.40" lengthAdjust="spacingAndGlyphs">Satker Teknologi Informasi</text>
<rect x="935.0" y="418.5" width="112.9" height="19.5" fill="#323232" fill-opacity="0.665"/>
<g transform="translate(935,419)"><path d="M6.9 5.6 a2.9 2.9 0 0 1 5.8 0 v4.6 a2.9 3.2 0 0 1 -5.8 0 z" fill="#f25c5c"/><rect x="9.1" y="12.6" width="1.6" height="1.8" fill="#f25c5c"/><rect x="6.9" y="14" width="6.2" height="1.15" rx="0.4" fill="#f25c5c"/><path d="M3.9 15.1 L16.2 2.9" stroke="#2b2b2b" stroke-width="2.7" fill="none"/><path d="M3.8 15.2 L16.3 2.8" stroke="#f25c5c" stroke-width="1.25" stroke-linecap="round" fill="none"/></g>
<text id="l4" class="lb" x="956.49" y="432.8" textLength="88.61" lengthAdjust="spacingAndGlyphs">Shinta Angreini</text>
<rect x="1133.0" y="418.5" width="70.9" height="19.5" fill="#323232" fill-opacity="0.665"/>
<g transform="translate(1133,419)"><path d="M6.9 5.6 a2.9 2.9 0 0 1 5.8 0 v4.6 a2.9 3.2 0 0 1 -5.8 0 z" fill="#f25c5c"/><rect x="9.1" y="12.6" width="1.6" height="1.8" fill="#f25c5c"/><rect x="6.9" y="14" width="6.2" height="1.15" rx="0.4" fill="#f25c5c"/><path d="M3.9 15.1 L16.2 2.9" stroke="#2b2b2b" stroke-width="2.7" fill="none"/><path d="M3.8 15.2 L16.3 2.8" stroke="#f25c5c" stroke-width="1.25" stroke-linecap="round" fill="none"/></g>
<text id="l5" class="lb" x="1154.50" y="432.8" textLength="46.56" lengthAdjust="spacingAndGlyphs">Sari - TI</text>
<rect x="935.0" y="532.5" width="90.9" height="19.5" fill="#323232" fill-opacity="0.665"/>
<g transform="translate(935,533)"><path d="M6.9 5.6 a2.9 2.9 0 0 1 5.8 0 v4.6 a2.9 3.2 0 0 1 -5.8 0 z" fill="#f25c5c"/><rect x="9.1" y="12.6" width="1.6" height="1.8" fill="#f25c5c"/><rect x="6.9" y="14" width="6.2" height="1.15" rx="0.4" fill="#f25c5c"/><path d="M3.9 15.1 L16.2 2.9" stroke="#2b2b2b" stroke-width="2.7" fill="none"/><path d="M3.8 15.2 L16.3 2.8" stroke="#f25c5c" stroke-width="1.25" stroke-linecap="round" fill="none"/></g>
<text id="l6" class="lb" x="957.53" y="546.8" textLength="64.26" lengthAdjust="spacingAndGlyphs">Audy Umar</text>
<rect x="1133.0" y="532.5" width="107.8" height="19.5" fill="#323232" fill-opacity="0.665"/>
<g transform="translate(1133,533)"><path d="M6.9 5.6 a2.9 2.9 0 0 1 5.8 0 v4.6 a2.9 3.2 0 0 1 -5.8 0 z" fill="#f25c5c"/><rect x="9.1" y="12.6" width="1.6" height="1.8" fill="#f25c5c"/><rect x="6.9" y="14" width="6.2" height="1.15" rx="0.4" fill="#f25c5c"/><path d="M3.9 15.1 L16.2 2.9" stroke="#2b2b2b" stroke-width="2.7" fill="none"/><path d="M3.8 15.2 L16.3 2.8" stroke="#f25c5c" stroke-width="1.25" stroke-linecap="round" fill="none"/></g>
<text id="l7" class="lb" x="1154.24" y="546.8" textLength="83.67" lengthAdjust="spacingAndGlyphs">Lisa Anggraini</text>
<rect x="935.0" y="646.5" width="99.0" height="19.5" fill="#323232" fill-opacity="0.665"/>
<g transform="translate(935,647)"><path d="M6.9 5.6 a2.9 2.9 0 0 1 5.8 0 v4.6 a2.9 3.2 0 0 1 -5.8 0 z" fill="#f25c5c"/><rect x="9.1" y="12.6" width="1.6" height="1.8" fill="#f25c5c"/><rect x="6.9" y="14" width="6.2" height="1.15" rx="0.4" fill="#f25c5c"/><path d="M3.9 15.1 L16.2 2.9" stroke="#2b2b2b" stroke-width="2.7" fill="none"/><path d="M3.8 15.2 L16.3 2.8" stroke="#f25c5c" stroke-width="1.25" stroke-linecap="round" fill="none"/></g>
<text id="l8" class="lb" x="956.55" y="660.8" textLength="73.36" lengthAdjust="spacingAndGlyphs">Ihwani Maris</text>
<rect x="1133.0" y="646.5" width="91.9" height="19.5" fill="#323232" fill-opacity="0.665"/>
<g transform="translate(1133,647)"><path d="M6.9 5.6 a2.9 2.9 0 0 1 5.8 0 v4.6 a2.9 3.2 0 0 1 -5.8 0 z" fill="#f25c5c"/><rect x="9.1" y="12.6" width="1.6" height="1.8" fill="#f25c5c"/><rect x="6.9" y="14" width="6.2" height="1.15" rx="0.4" fill="#f25c5c"/><path d="M3.9 15.1 L16.2 2.9" stroke="#2b2b2b" stroke-width="2.7" fill="none"/><path d="M3.8 15.2 L16.3 2.8" stroke="#f25c5c" stroke-width="1.25" stroke-linecap="round" fill="none"/></g>
<text id="l9" class="lb" x="1154.29" y="660.8" textLength="66.59" lengthAdjust="spacingAndGlyphs">Brainmatics</text>
</g>
</svg>
</body>
</html>
